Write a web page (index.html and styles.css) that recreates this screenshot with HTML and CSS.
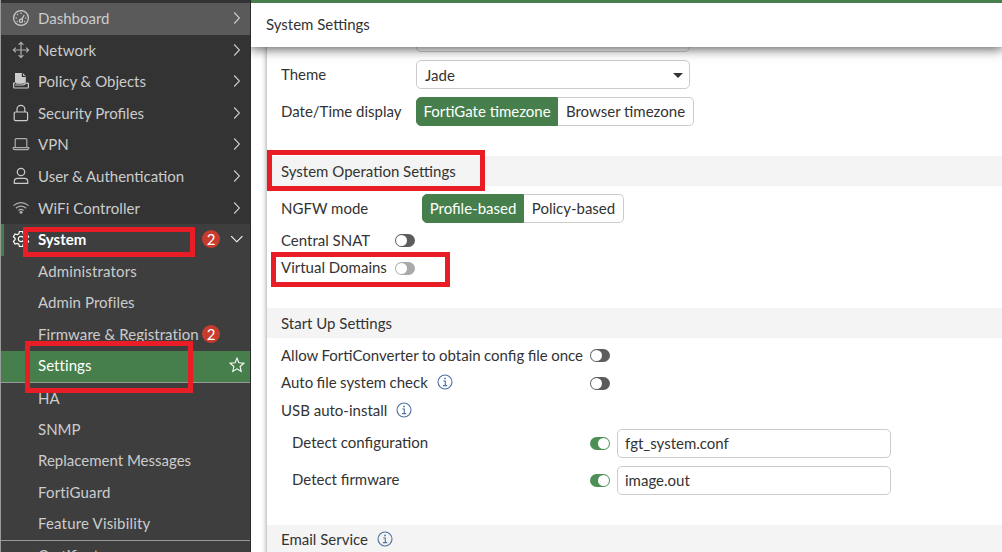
FILE: index.html
```html
<!DOCTYPE html>
<html lang="en">
<head>
<meta charset="utf-8">
<title>System Settings</title>
<link rel="stylesheet" href="styles.css">
</head>
<body>
<svg class="defs" aria-hidden="true">
  <symbol id="chev" viewBox="0 0 8 14"><path d="M1.2 1.5 L6.4 7 L1.2 12.5"/></symbol>
  <symbol id="info" viewBox="0 0 16 16"><circle cx="8" cy="8" r="7"/><path d="M6.3 7 H8.3 V11.5 M6 11.6 H10.2" /><path class="dot" d="M7.2 3.8h1.6v1.5H7.2z"/></symbol>
</svg>
<div class="app">
  <nav class="sidebar">
    <a class="item hover"><svg class="icon" viewBox="0 0 18 18"><circle cx="9" cy="9" r="7.4"/><circle cx="9" cy="11.8" r="1.6"/><path d="M9.8 10.4 L12.2 6"/><path d="M9 3.6v1.4M5.2 5.2l.8.8M3.6 9h1.4M13 9h1.4M4.8 12.8l.9-.6M13.2 12.8l-.9-.6"/></svg><span class="name">Dashboard</span><svg class="chev"><use href="#chev"/></svg></a>
    <a class="item"><svg class="icon dim" viewBox="0 0 18 18"><path d="M9 1.5V16.5M1.5 9H16.5M6.6 3.8L9 1.4l2.4 2.4M6.6 14.2L9 16.6l2.4-2.4M3.8 6.6L1.4 9l2.4 2.4M14.2 6.6L16.6 9l-2.4 2.4"/></svg><span class="name loose">Network</span><svg class="chev"><use href="#chev"/></svg></a>
    <a class="item"><svg class="icon" viewBox="0 0 18 18"><path class="solid" d="M3 1H10.6L13.8 4V9.5Q13 11.8 10 11.8H5.5Q3.8 11.8 3 10.2z"/><path class="cut" d="M10.4 1.2V4.3H13.6"/><path d="M3 11.2H1.7V15.3Q1.7 16 2.4 16H15.6Q16.4 16 16.4 15.3V12Q16.4 11.2 15.5 11.2H13.4Q12.6 13 10.5 13H3.2"/></svg><span class="name">Policy &amp; Objects</span><svg class="chev"><use href="#chev"/></svg></a>
    <a class="item"><svg class="icon" viewBox="0 0 18 18"><rect x="2.2" y="8" width="13.4" height="8.6" rx="1.4"/><path d="M5 8V5.2a3.9 3.9 0 0 1 7.8 0V8"/></svg><span class="name">Security Profiles</span><svg class="chev"><use href="#chev"/></svg></a>
    <a class="item"><svg class="icon dim" viewBox="0 0 18 18"><path d="M3.2 12.5V4.6Q3.2 3.6 4.2 3.6H13.8Q14.8 3.6 14.8 4.6V12.5M1.2 12.6H16.8V13.6Q16.6 14.6 15.6 14.6H2.4Q1.4 14.6 1.2 13.6z"/></svg><span class="name">VPN</span><svg class="chev"><use href="#chev"/></svg></a>
    <a class="item"><svg class="icon" viewBox="0 0 18 18"><circle cx="9" cy="5" r="3.7"/><path d="M2.3 16.4V14Q2.6 11.3 5.4 11.3H12.6Q15.4 11.3 15.7 14V16.4z"/></svg><span class="name">User &amp; Authentication</span><svg class="chev"><use href="#chev"/></svg></a>
    <a class="item"><svg class="icon dim" viewBox="0 0 18 18"><path d="M1.4 6.6Q9 .6 16.6 6.6M3.8 9.2Q9 5.2 14.2 9.2M6.4 11.4Q9 9.4 11.6 11.4"/><circle class="solid" cx="9" cy="13.2" r="1.5"/></svg><span class="name loose">WiFi Controller</span><svg class="chev"><use href="#chev"/></svg></a>
    <div class="group">
      <a class="item open"><svg class="icon" viewBox="0 0 18 18"><path d="M7.4 1.5H10.6L11.2 3.8L12.7 4.7L15 4L16.6 6.8L14.9 8.4V9.8L16.6 11.3L15 14L12.7 13.4L11.2 14.2L10.6 16.5H7.4L6.8 14.2L5.3 13.4L3 14L1.4 11.3L3.1 9.7V8.3L1.4 6.8L3 4L5.3 4.7L6.8 3.8z"/><circle cx="9" cy="9" r="2.7"/></svg><span class="name">System</span><span class="badge">2</span><svg class="chev down" viewBox="0 0 14 8"><path d="M1.2 1.2L6.8 6.8L12.4 1.2"/></svg></a>
      <a class="item sub looser">Administrators</a>
      <a class="item sub loose">Admin Profiles</a>
      <a class="item sub"><span class="name loose">Firmware &amp; Registration</span><span class="badge">2</span></a>
      <a class="item sub active"><span class="name loose">Settings</span><svg class="star" viewBox="0 0 16 16"><path d="M8 1.2L9.9 5.8L14.9 6.2L11.1 9.5L12.2 14.4L8 11.8L3.8 14.4L4.9 9.5L1.1 6.2L6.1 5.8z"/></svg></a>
      <a class="item sub rule">HA</a>
      <a class="item sub">SNMP</a>
      <a class="item sub">Replacement Messages</a>
      <a class="item sub looser">FortiGuard</a>
      <a class="item sub looser">Feature Visibility</a>
      <a class="item sub rule">Certificates</a>
    </div>
  </nav>
  <main class="main">
    <header class="title">System Settings</header>
    <div class="panel">
      <div class="select previous"></div>
      <div class="row control"><span class="label wide">Theme</span><div class="select">Jade<i class="caret"></i></div></div>
      <div class="row control"><span class="label wide">Date/Time display</span><div class="segments timezone"><b>FortiGate timezone</b><span>Browser timezone</span></div></div>
      <h2 class="section operation">System Operation Settings</h2>
      <div class="row control"><span class="label mode">NGFW mode</span><div class="segments ngfw"><b>Profile-based</b><span>Policy-based</span></div></div>
      <div class="row"><span class="label narrow">Central SNAT</span><i class="toggle"></i></div>
      <div class="row"><span class="label narrow">Virtual Domains</span><i class="toggle disabled"></i></div>
      <h2 class="section startup">Start Up Settings</h2>
      <div class="row"><span class="label long tight">Allow FortiConverter to obtain config file once</span><i class="toggle"></i></div>
      <div class="row"><span class="label long tight">Auto file system check<svg class="info"><use href="#info"/></svg></span><i class="toggle"></i></div>
      <div class="row"><span class="label long">USB auto-install<svg class="info"><use href="#info"/></svg></span></div>
      <div class="row control"><span class="label long indent">Detect configuration</span><i class="toggle on"></i><div class="field">fgt_system.conf</div></div>
      <div class="row control"><span class="label long indent">Detect firmware</span><i class="toggle on"></i><div class="field">image.out</div></div>
      <h2 class="section email">Email Service<svg class="info"><use href="#info"/></svg></h2>
    </div>
  </main>
  <div class="mark mark-system"></div>
  <div class="mark mark-settings"></div>
  <div class="mark mark-operation"></div>
  <div class="mark mark-domains"></div>
</div>
</body>
</html>
```
FILE: styles.css
```css
* { box-sizing: border-box; }
body { margin: 0; font-family: Lato, sans-serif; font-size: 15px; color: #333; background: #fff; }
.defs { position: absolute; width: 0; height: 0; }
svg { fill: none; stroke: currentColor; stroke-width: 1.2; flex: none; }
.app { position: relative; display: flex; width: 1002px; height: 552px; overflow: hidden; }

.sidebar { width: 251px; flex: none; height: 552px; overflow: hidden; background: #333; border-left: 1px solid #9a9a9a; color: #ccc; border-right: 1px solid #2b2b2b; }
.sidebar::before { content: ""; display: block; height: 3px; margin-bottom: -.7px; border-bottom: 1px solid #467f4c; }
.item { display: flex; align-items: center; height: 31.58px; padding: 0 8px 2px 11px; }
.item.hover { background: #5a5a5a; padding-bottom: 3px; }
.icon { width: 18px; height: 18px; margin-right: 8px; }
.dim { opacity: .8; }
.solid { fill: #ccc; stroke: none; }
.cut { stroke: #333; }
.name { flex: 1; white-space: nowrap; }
.loose { letter-spacing: .07px; }
.looser { letter-spacing: .17px; }
.chev { width: 8px; height: 14px; margin-right: 1px; stroke-width: 1.1; }
.chev.down { width: 14px; height: 8px; margin: 0 -2px 0 10px; }
.group { background: #3e3e3e; }
.open { color: #fff; font-weight: 700; border-left: 3px solid #467f4c; padding-left: 8px; }
.badge { width: 18px; height: 18px; border-radius: 50%; background: #c83c2f; color: #fff; text-align: center; line-height: 18px; font-weight: 400; }
.sub { padding-left: 37px; }
.sub .badge { margin-right: 22px; }
.active { background: #467f4c; color: #fff; }
.star { width: 16px; height: 16px; margin-right: -3px; stroke-width: 1.1; }
.rule { border-top: 1px solid #999; }

.main { flex: 1; border-top: 3px solid #467f4c; height: 552px; display: flex; flex-direction: column; }
.title { height: 44px; flex: none; line-height: 43px; padding-left: 15px; background: #fff; position: relative; z-index: 1; box-shadow: 0 1px 11px 1px rgba(0,0,0,.65); clip-path: inset(0 0 -20px 0); }
.panel { flex: 1; margin-left: 15px; border-left: 1px solid #ccc; box-shadow: -1px 0 4px rgba(0,0,0,.22); padding-left: 14px; background: #fff; }
.row { display: flex; align-items: center; height: 27.5px; }
.control { height: 37px; }
.label { white-space: nowrap; display: flex; align-items: center; padding-bottom: 2px; }
.tight { word-spacing: -.4px; }
.wide { width: 135px; }
.mode { width: 141px; }
.narrow { width: 114px; }
.long { width: 309px; }
.indent { padding-left: 11px; }
.select, .field { width: 274px; height: 29px; border: 1px solid #ccc; border-radius: 5px; padding: 0 6px 0 8px; display: flex; align-items: center; justify-content: space-between; }
.previous { margin: -24px 0 4px 135px; }
.caret { border: 5px solid transparent; border-top-color: #333; border-bottom: 0; margin-top: 2px; }
.segments { display: flex; height: 29px; line-height: 27px; }
.segments b, .segments span { border: 1px solid #ccc; text-align: center; white-space: nowrap; }
.segments b { font-weight: 400; background: #467f4c; color: #fff; border-color: #467f4c; border-radius: 5px 0 0 5px; }
.segments span { border-left: 0; border-radius: 0 5px 5px 0; flex: 1; }
.timezone { width: 278px; }
.timezone b { width: 142px; }
.ngfw { width: 202px; }
.ngfw b { width: 102px; }
.section { height: 30px; margin: 0 0 0 -14px; padding-left: 14px; background: #f4f4f4; font-size: 15px; font-weight: 400; display: flex; align-items: center; }
.operation, .startup { margin-top: 26px; margin-bottom: 4px; }
.email { margin-top: 26px; padding-bottom: 1px; }
.toggle { width: 20px; height: 13px; border-radius: 7px; background: #5c5c5c; padding: 1px; display: flex; flex: none; }
.toggle::before { content: ""; width: 11px; height: 11px; border-radius: 50%; background: #fff; }
.toggle.disabled { background: #aaa; }
.toggle.on { background: #4c9058; justify-content: flex-end; }
.field { margin-left: 7px; padding: 0 7px; }
.info { width: 16px; height: 16px; margin-left: 9px; color: #4b709f; stroke-width: 1.1; }
.dot { fill: currentColor; stroke: none; }

.mark { position: absolute; z-index: 3; border: 5px solid #e91d25; }
.mark-system { left: 23px; top: 227px; width: 172px; height: 30px; }
.mark-settings { left: 25px; top: 341px; width: 168px; height: 52px; }
.mark-operation { left: 267px; top: 150px; width: 218px; height: 41px; }
.mark-domains { left: 271px; top: 252px; width: 179px; height: 35px; }
```
